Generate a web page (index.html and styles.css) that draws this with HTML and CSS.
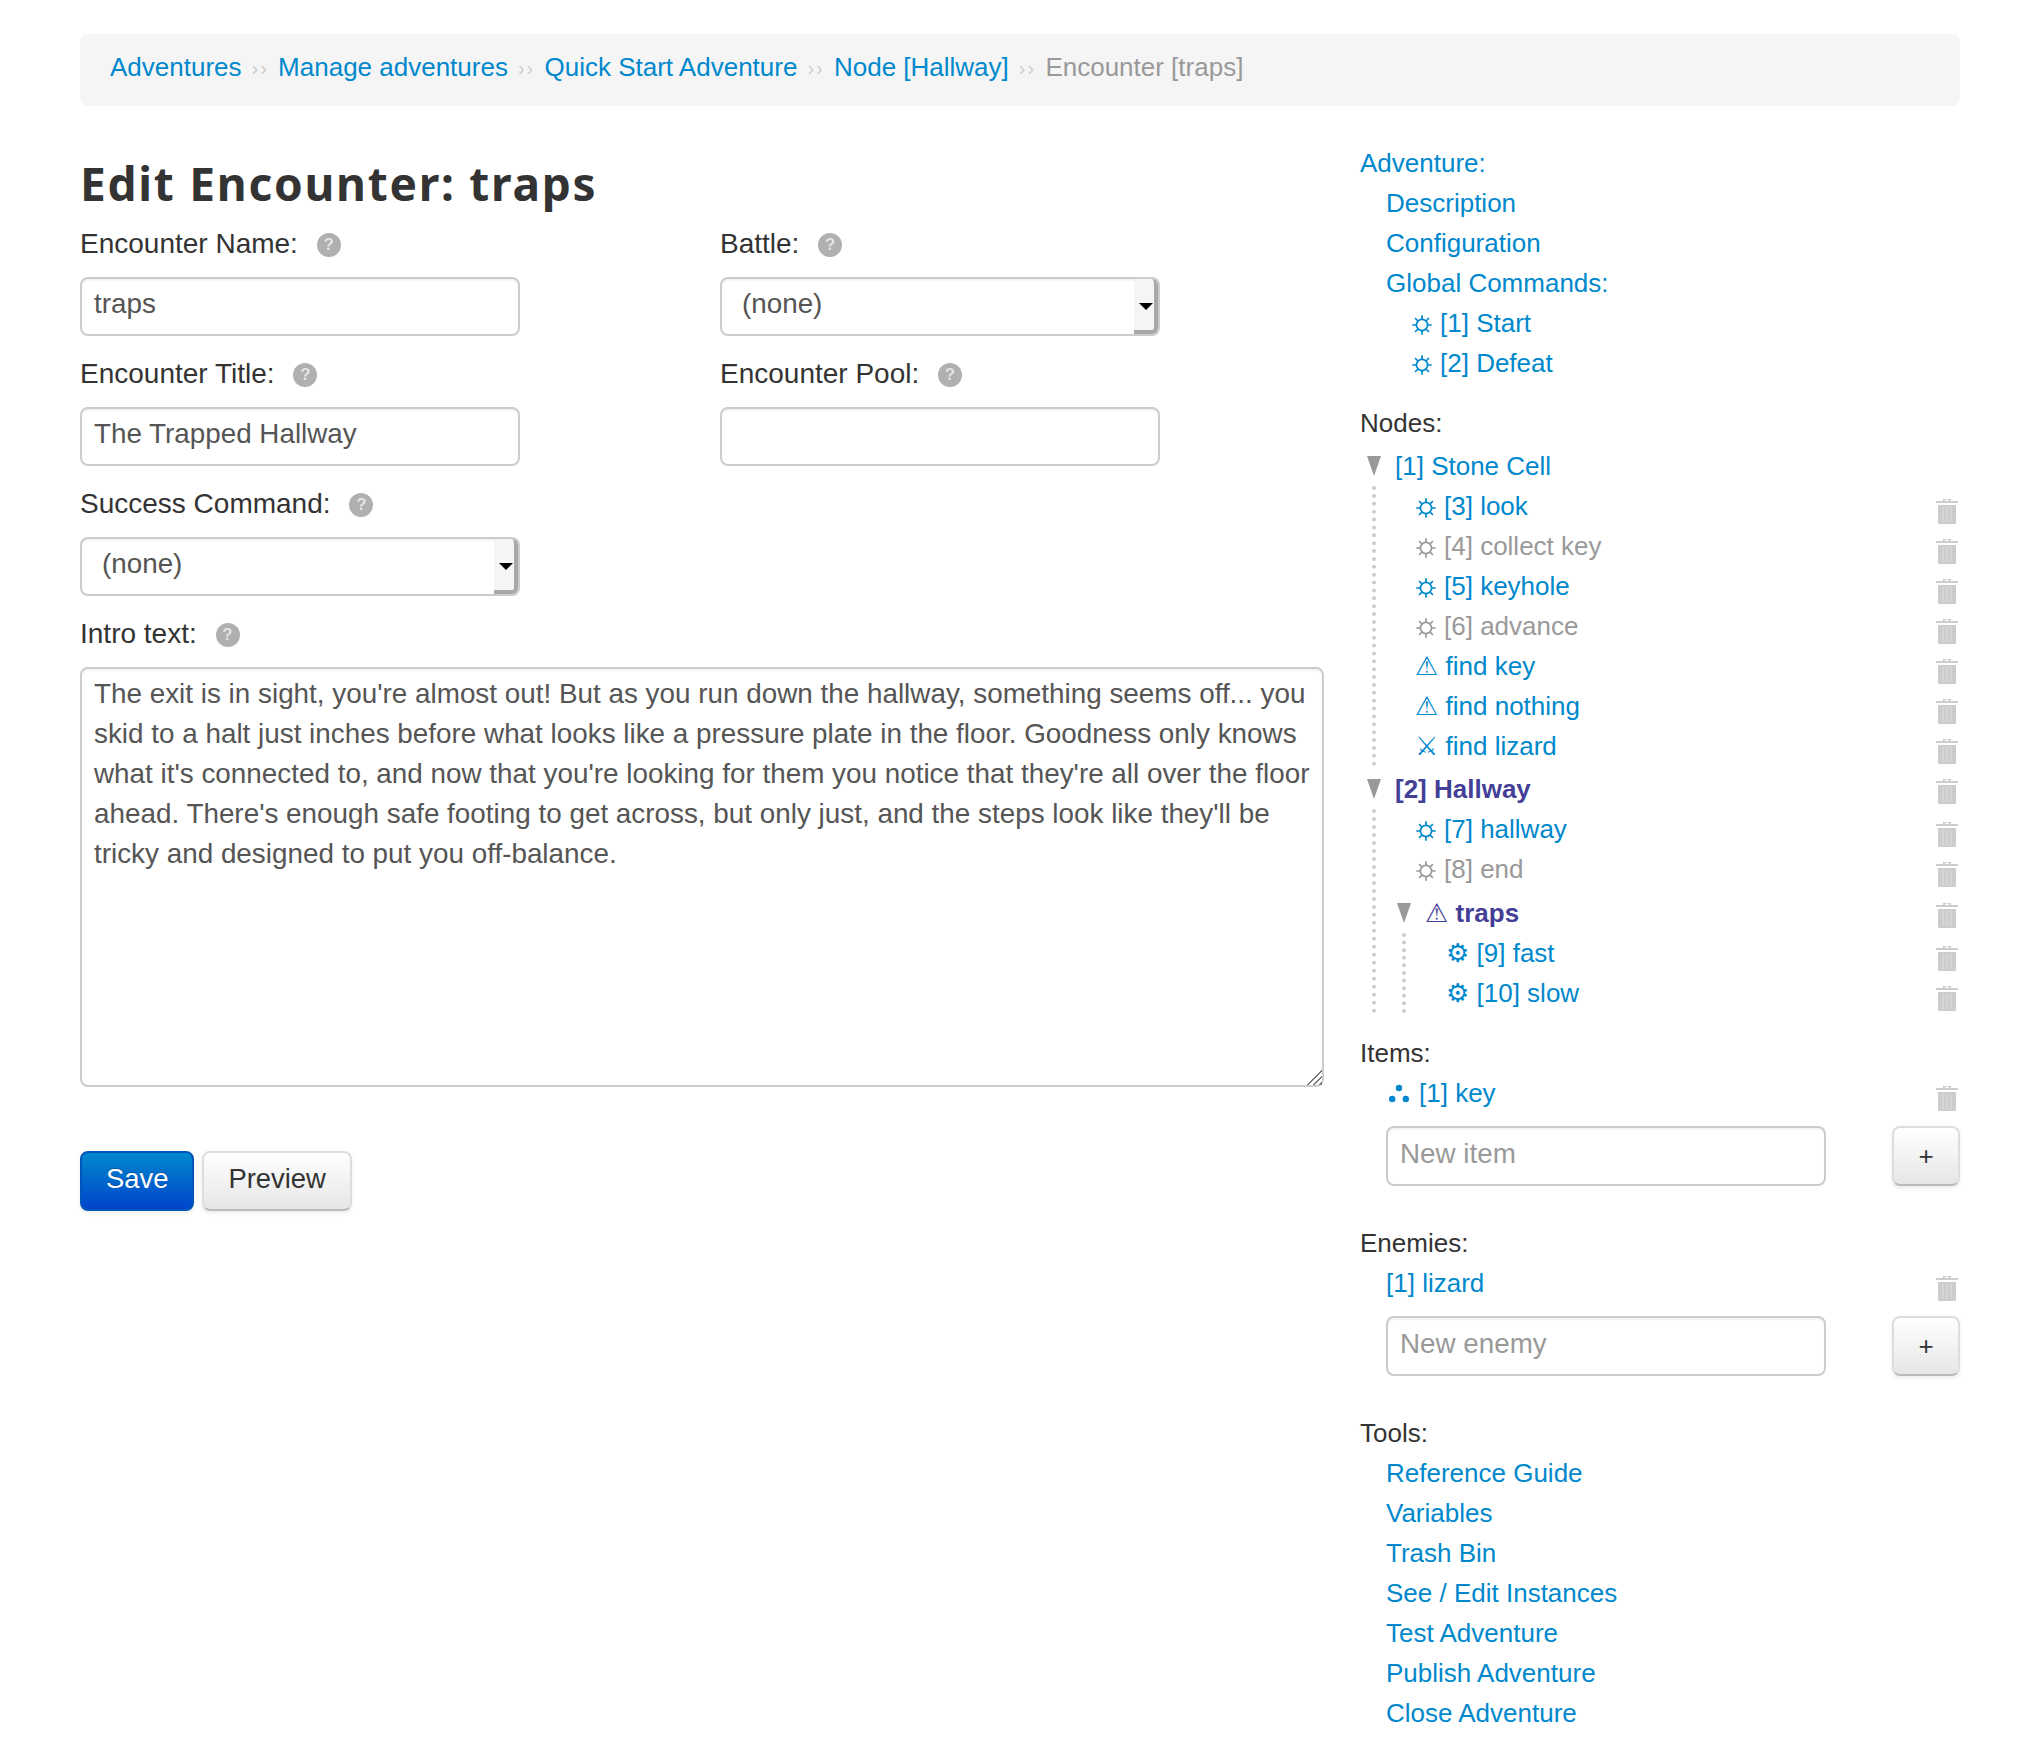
FILE: index.html
```html
<!DOCTYPE html>
<html lang="en">
<head>
<meta charset="utf-8">
<title>Edit Encounter: traps</title>
<link rel="stylesheet" href="styles.css">
</head>
<body>
<svg class="defs" width="0" height="0" aria-hidden="true">
  <symbol id="trash" viewBox="0 0 22 26">
    <path d="M7 3V1h8v2h4.500v.1H22V5H0V3.100h2.500V3z M9 1.800V3h4V1.800z" fill-rule="evenodd"/>
    <path d="M2 7h18v17.500a1.500 1.500 0 0 1-1.500 1.500h-15A1.500 1.500 0 0 1 2 24.500z"/>
    <path d="M6.500 9v15h1V9z M10.500 9v15h1V9z M14.500 9v15h1V9z" fill="#dedede"/>
  </symbol>
  <symbol id="sun" viewBox="0 0 20 20">
    <g fill="none" stroke="currentColor" stroke-width="1.700">
      <circle cx="10" cy="10" r="5.600"/>
      <path d="M10 0.300V4.400M10 15.600V19.700M0.300 10H4.400M15.600 10H19.700M3.100 3.100L6 6M14 14L16.900 16.900M3.100 16.900L6 14M14 6L16.900 3.100"/>
    </g>
  </symbol>
  <symbol id="dots" viewBox="0 0 20 20">
    <circle cx="10" cy="4" r="3.200" fill="currentColor"/>
    <circle cx="3.200" cy="15" r="3.200" fill="currentColor"/>
    <circle cx="16.800" cy="15" r="3.200" fill="currentColor"/>
  </symbol>
</svg>
<div class="page">
  <nav class="crumbs">
    <a href="#">Adventures</a><span class="sep">››</span>
    <a href="#">Manage adventures</a><span class="sep">››</span>
    <a href="#">Quick Start Adventure</a><span class="sep">››</span>
    <a href="#">Node [Hallway]</a><span class="sep">››</span>
    <span class="here">Encounter [traps]</span>
  </nav>
  <div class="columns">
    <main class="main">
      <h1>Edit Encounter: traps</h1>
      <div class="fields">
        <div class="field">
          <label class="lab">Encounter Name: <span class="help">?</span></label>
          <input class="ctl" type="text" value="traps">
        </div>
        <div class="field">
          <label class="lab">Battle: <span class="help">?</span></label>
          <div class="sel"><select class="ctl"><option>(none)</option></select></div>
        </div>
        <div class="field">
          <label class="lab">Encounter Title: <span class="help">?</span></label>
          <input class="ctl" type="text" value="The Trapped Hallway">
        </div>
        <div class="field">
          <label class="lab">Encounter Pool: <span class="help">?</span></label>
          <input class="ctl" type="text">
        </div>
        <div class="field">
          <label class="lab">Success Command: <span class="help">?</span></label>
          <div class="sel"><select class="ctl"><option>(none)</option></select></div>
        </div>
      </div>
      <label class="lab">Intro text: <span class="help">?</span></label>
      <textarea class="intro">The exit is in sight, you're almost out! But as you run down the hallway, something seems off... you skid to a halt just inches before what looks like a pressure plate in the floor. Goodness only knows what it's connected to, and now that you're looking for them you notice that they're all over the floor ahead. There's enough safe footing to get across, but only just, and the steps look like they'll be tricky and designed to put you off-balance.</textarea>
      <div class="actions">
        <button class="btn primary">Save</button>
        <button class="btn">Preview</button>
      </div>
    </main>
    <aside class="side">
      <div class="row"><a href="#">Adventure:</a></div>
      <div class="row ind"><a href="#">Description</a></div>
      <div class="row ind"><a href="#">Configuration</a></div>
      <div class="row ind"><a href="#">Global Commands:</a></div>
      <div class="row ind2"><a href="#"><svg class="sun"><use href="#sun"/></svg>[1] Start</a></div>
      <div class="row ind2"><a href="#"><svg class="sun"><use href="#sun"/></svg>[2] Defeat</a></div>

      <div class="row head nodes">Nodes:</div>
      <div class="branch first"><span class="tri"></span><a href="#">[1] Stone Cell</a></div>
      <div class="kids">
        <div class="row leaf"><a href="#"><svg class="sun"><use href="#sun"/></svg>[3] look</a><svg class="trash"><use href="#trash"/></svg></div>
        <div class="row leaf"><a href="#" class="off"><svg class="sun"><use href="#sun"/></svg>[4] collect key</a><svg class="trash"><use href="#trash"/></svg></div>
        <div class="row leaf"><a href="#"><svg class="sun"><use href="#sun"/></svg>[5] keyhole</a><svg class="trash"><use href="#trash"/></svg></div>
        <div class="row leaf"><a href="#" class="off"><svg class="sun"><use href="#sun"/></svg>[6] advance</a><svg class="trash"><use href="#trash"/></svg></div>
        <div class="row leaf"><a href="#">⚠ find key</a><svg class="trash"><use href="#trash"/></svg></div>
        <div class="row leaf"><a href="#">⚠ find nothing</a><svg class="trash"><use href="#trash"/></svg></div>
        <div class="row leaf"><a href="#">⚔ find lizard</a><svg class="trash"><use href="#trash"/></svg></div>
      </div>
      <div class="branch"><span class="tri"></span><a href="#" class="cur">[2] Hallway</a><svg class="trash"><use href="#trash"/></svg></div>
      <div class="kids">
        <div class="row leaf"><a href="#"><svg class="sun"><use href="#sun"/></svg>[7] hallway</a><svg class="trash"><use href="#trash"/></svg></div>
        <div class="row leaf"><a href="#" class="off"><svg class="sun"><use href="#sun"/></svg>[8] end</a><svg class="trash"><use href="#trash"/></svg></div>
        <div class="branch"><span class="tri"></span><a href="#" class="cur"><span class="plain">⚠</span> traps</a><svg class="trash"><use href="#trash"/></svg></div>
        <div class="kids sub">
          <div class="row leaf"><a href="#">⚙ [9] fast</a><svg class="trash"><use href="#trash"/></svg></div>
          <div class="row leaf"><a href="#">⚙ [10] slow</a><svg class="trash"><use href="#trash"/></svg></div>
        </div>
      </div>

      <div class="row head items">Items:</div>
      <div class="row ind"><a href="#"><svg class="dots"><use href="#dots"/></svg>[1] key</a><svg class="trash"><use href="#trash"/></svg></div>
      <div class="adder">
        <input class="ctl" type="text" placeholder="New item">
        <button class="btn plus">+</button>
      </div>

      <div class="row head enemies">Enemies:</div>
      <div class="row ind"><a href="#">[1] lizard</a><svg class="trash"><use href="#trash"/></svg></div>
      <div class="adder">
        <input class="ctl" type="text" placeholder="New enemy">
        <button class="btn plus">+</button>
      </div>

      <div class="row head tools">Tools:</div>
      <div class="row ind"><a href="#">Reference Guide</a></div>
      <div class="row ind"><a href="#">Variables</a></div>
      <div class="row ind"><a href="#">Trash Bin</a></div>
      <div class="row ind"><a href="#">See / Edit Instances</a></div>
      <div class="row ind"><a href="#">Test Adventure</a></div>
      <div class="row ind"><a href="#">Publish Adventure</a></div>
      <div class="row ind"><a href="#">Close Adventure</a></div>
    </aside>
  </div>
</div>
</body>
</html>
```
FILE: styles.css
```css
*, *::before, *::after { box-sizing: border-box; }
html, body { margin: 0; background: #fff; }
body {
  font: 26px/40px "Liberation Sans", "DejaVu Sans", sans-serif;
  color: #333;
}
a { color: #08c; text-decoration: none; }
.defs { position: absolute; }
.page { padding: 34px 80px 0; }

.crumbs {
  height: 72px;
  padding: 13px 30px 0;
  margin-bottom: 37px;
  background: #f5f5f5;
  border-radius: 8px;
  white-space: nowrap;
}
.sep {
  color: #ccc;
  font-size: 20px;
  letter-spacing: 2px;
  padding: 0 2px 0 10px;
  vertical-align: 1px;
}
.here { color: #999; }

.columns { display: flex; gap: 36px; }
.main { width: 1244px; flex: none; }
.side { width: 600px; flex: none; }

h1 {
  margin: 0;
  height: 81px;
  font: 700 46px/80px "Noto Sans", sans-serif;
  letter-spacing: 1.75px;
  color: #333;
}
.fields {
  display: grid;
  grid-template-columns: 440px 440px;
  column-gap: 200px;
}
.field { margin-bottom: 18px; }
.lab { display: block; height: 40px; margin-bottom: 13px; font-size: 28px; }
.help {
  display: inline-block;
  width: 24px;
  height: 24px;
  margin-left: 11px;
  border-radius: 50%;
  background: #b0b0b0;
  color: #e4e4e4;
  font: bold 17px/24px "Liberation Sans", sans-serif;
  text-align: center;
  vertical-align: 3px;
  filter: blur(0.4px);
}
.ctl {
  display: block;
  width: 440px;
  height: 59px;
  padding: 3px 12px 8px;
  border: 2px solid #ccc;
  border-radius: 8px;
  background: #fff;
  box-shadow: inset 0 2px 2px rgba(0,0,0,.05);
  font: 27.8px/40px "Liberation Sans", sans-serif;
  color: #555;
}
.ctl::placeholder { color: #999; opacity: 1; }
.sel { position: relative; width: 440px; }
.sel select { appearance: none; padding-left: 20px; }
.sel::after {
  content: "";
  position: absolute;
  top: 2px;
  right: 2px;
  width: 24px;
  height: 55px;
  background: #f5f5f5;
  border-right: 4px solid #a9a9a9;
  border-bottom: 4px solid #a9a9a9;
  border-radius: 0 6px 6px 0;
}
.sel::before {
  content: "";
  position: absolute;
  z-index: 1;
  top: 26px;
  right: 7px;
  border: 7px solid transparent;
  border-top: 7px solid #000;
  border-bottom: 0;
}
.intro {
  display: block;
  width: 1244px;
  height: 420px;
  padding: 5px 6px 5px 12px;
  border: 2px solid #ccc;
  border-radius: 8px;
  box-shadow: inset 0 2px 2px rgba(0,0,0,.05);
  font: 27.85px/40px "Liberation Sans", sans-serif;
  color: #555;
  resize: both;
  outline: none;
}
.intro::-webkit-resizer {
  background: linear-gradient(135deg, transparent 48%, #777 48%, #777 56%, transparent 56%, transparent 68%, #777 68%, #777 76%, transparent 76%, transparent 88%, #777 88%);
}
.actions { display: flex; gap: 8px; margin-top: 64px; }
.btn {
  height: 60px;
  padding: 0 24px 4px;
  border: 2px solid #ddd;
  border-bottom-color: #bbb;
  border-radius: 8px;
  background: linear-gradient(#fff, #e6e6e6);
  box-shadow: 0 2px 4px rgba(0,0,0,.08);
  font: 27.4px/40px "Liberation Sans", sans-serif;
  color: #333;
}
.btn.primary {
  border-color: #0055bb;
  background: linear-gradient(#08c, #04c);
  color: #fff;
  text-shadow: 0 -1px 0 rgba(0,0,0,.25);
}

.row { display: flex; justify-content: space-between; height: 40px; }
.ind { padding-left: 26px; }
.ind2 { padding-left: 51px; }
.head { color: #333; }
.nodes { margin-top: 20px; }
.items { margin-top: 20px; }
.enemies { margin-top: 37px; }
.tools { margin-top: 37px; }

.sun {
  width: 20px;
  height: 20px;
  margin: 0 8px 0 1px;
  vertical-align: -3px;
}
.dots {
  width: 20px;
  height: 20px;
  margin: 0 10px 0 3px;
  vertical-align: -2px;
}

.branch {
  display: flex;
  align-items: center;
  height: 42px;
  padding-left: 7px;
}
.branch.first { margin-top: 1px; }
.branch a { margin: 2px 0 0 14px; }
.branch .trash { margin-left: auto; }
.tri {
  width: 0;
  height: 0;
  margin-top: 2px;
  border: 7px solid transparent;
  border-top: 20px solid #999;
  border-bottom: 0;
  flex: none;
}
.kids {
  margin: 0 0 1px 12px;
  padding-left: 14px;
  border-left: 4px dotted #ccc;
}
.kids > .branch { margin-top: 2px; }
.kids.sub { margin: 0 0 0 12px; }
.kids.sub .leaf { padding-left: 26px; }
.leaf { padding-left: 25px; }
.off { color: #999; }
.cur { color: #443f96; font-weight: bold; }
.plain { font-weight: normal; }
.trash {
  width: 22px;
  height: 26px;
  margin: 12px 2px 0 0;
  fill: #ccc;
  flex: none;
}
.branch .trash { margin-top: 6px; }
.adder {
  display: flex;
  justify-content: space-between;
  margin: 13px 0 0 26px;
}
.adder .ctl { height: 60px; padding-top: 4px; }
.plus { width: 68px; padding: 0; font-size: 26px; }
```
